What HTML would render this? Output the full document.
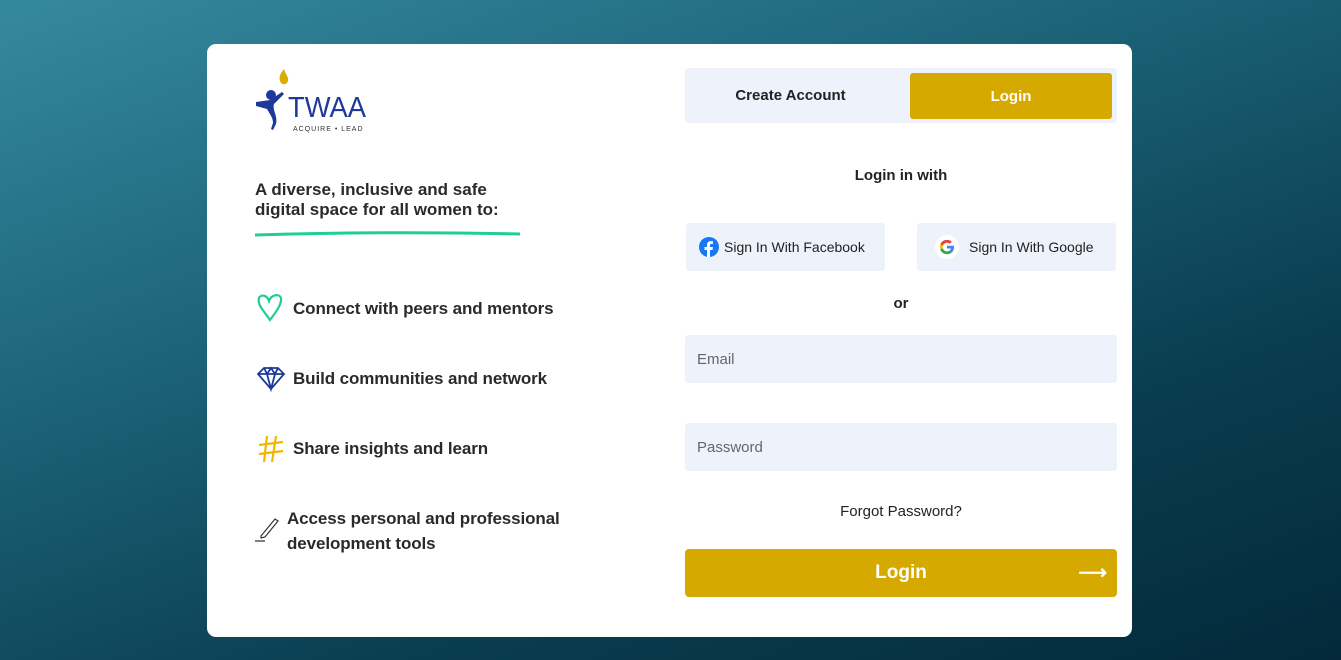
<!DOCTYPE html>
<html><head><style>
*{margin:0;padding:0;box-sizing:border-box}
body{width:1341px;height:660px;overflow:hidden;background:linear-gradient(160deg,#35899f 0%,#1a5f74 40%,#0a3d50 70%,#03293a 100%);font-family:"Liberation Sans",sans-serif;color:#222;position:relative}
.card{position:absolute;left:207px;top:44px;width:925px;height:593px;background:#fff;border-radius:9px}
.abs{position:absolute}
.feat{position:absolute;left:86px;font-size:17px;font-weight:bold;color:#2a2a2a;letter-spacing:-0.1px}
.tabs{left:478px;top:24px;width:432px;height:55px;background:#eef2fb;border-radius:4px}
.btn{font-size:15px;font-weight:bold;display:flex;align-items:center;justify-content:center}
.inp{left:478px;width:432px;height:48px;background:#eef2fb;border-radius:3px;font-size:15px;color:#666;padding-left:12px;display:flex;align-items:center}
.soc{top:179px;height:48px;background:#eef2fb;border-radius:3px;font-size:14px;color:#222;display:flex;align-items:center}
</style></head><body>
<div class="card">
<svg class="abs" style="left:47px;top:24px" width="115" height="66" viewBox="0 0 115 66">
<path d="M30 1c-4 5-6 9-3 14 4 3 8 0 7-5-1-3-3-5-4-9z" fill="#d9ac00"/>
<circle cx="17" cy="27" r="5" fill="#1d3a9a"/>
<path d="M2 34l14-2 12-8 2 2-10 10c-2 6 4 12 2 20l-3 6-2-1 2-6c0-6-4-10-6-14l-11-3z" fill="#1d3a9a"/>
<text x="34" y="49" font-family="Liberation Sans" font-size="29" fill="#1d3a9a" textLength="78" lengthAdjust="spacingAndGlyphs">TWAA</text>
<text x="39" y="63" font-family="Liberation Sans" font-size="7" fill="#333" letter-spacing="1">ACQUIRE • LEAD</text>
</svg>
<div class="abs" style="left:48px;top:136px;font-size:17px;font-weight:bold;line-height:20px;color:#2a2a2a">A diverse, inclusive and safe<br>digital space for all women to:</div>
<svg class="abs" style="left:47px;top:186px" width="268" height="8"><path d="M1 5Q130 1 266 4" stroke="#1fcf8f" stroke-width="3" fill="none"/></svg>
<svg class="abs" style="left:49px;top:249px" width="30" height="30" viewBox="0 0 30 30"><path d="M14 27C8 18 1 12 3 5c2-4 8-3 10 3 2-6 10-8 12-3 1 6-5 14-11 22z" stroke="#1fcf8f" stroke-width="2.2" fill="none"/></svg>
<div class="feat" style="top:255px">Connect with peers and mentors</div>
<svg class="abs" style="left:49px;top:322px" width="30" height="26" viewBox="0 0 30 26"><path d="M2 8l6-6h14l6 6-13 15z M2 8h26 M8 2l3 6 4 15 4-15 3-6 M11 8l4-6 4 6" stroke="#1d3a9a" stroke-width="1.8" fill="none"/></svg>
<div class="feat" style="top:325px">Build communities and network</div>
<svg class="abs" style="left:50px;top:390px" width="28" height="30" viewBox="0 0 28 30"><path d="M10 2L7 28 M19 2l-4 26 M2 11l24-3 M2 20l24-3" stroke="#f5b400" stroke-width="2.2" fill="none"/></svg>
<div class="feat" style="top:395px">Share insights and learn</div>
<svg class="abs" style="left:46px;top:472px" width="28" height="28" viewBox="0 0 28 28"><path d="M8 20l14-17 3 2-13 16-4 1z M2 25h10" stroke="#333" stroke-width="1.2" fill="none"/></svg>
<div class="feat" style="left:80px;top:462px;line-height:25px">Access personal and professional<br>development tools</div>

<div class="abs tabs"><div class="abs btn" style="left:0;top:0;width:211px;height:55px">Create Account</div>
<div class="abs btn" style="left:225px;top:5px;width:202px;height:46px;background:#d6a900;color:#fff;border-radius:3px">Login</div></div>
<div class="abs btn" style="left:478px;top:120px;width:432px;height:22px">Login in with</div>
<div class="abs soc" style="left:479px;width:199px;padding-left:13px"><svg width="20" height="20" viewBox="0 0 20 20"><circle cx="10" cy="10" r="10" fill="#1877f2"/><path d="M11 20v-7h2.5l.4-3H11V8.3c0-.8.3-1.4 1.4-1.4H14V4.2c-.3 0-1.2-.1-2.2-.1-2.3 0-3.8 1.4-3.8 3.9V10H5.5v3H8v7z" fill="#fff"/></svg><span style="margin-left:5px">Sign In With Facebook</span></div>
<div class="abs soc" style="left:710px;width:199px;padding-left:18px"><svg width="24" height="24" viewBox="0 0 24 24"><circle cx="12" cy="12" r="12" fill="#fff"/><path d="M19 12.2c0-.5 0-1-.1-1.4H12v2.7h3.9c-.2.9-.7 1.6-1.4 2.1v1.8h2.3c1.4-1.2 2.2-3 2.2-5.2z" fill="#4285f4"/><path d="M12 19.2c1.900 0 3.6-.6 4.8-1.7l-2.3-1.8c-.6.4-1.5.7-2.5.7-1.9 0-3.5-1.3-4.1-3H5.5v1.9c1.2 2.3 3.6 3.9 6.5 3.900z" fill="#34a853"/><path d="M7.9 13.4c-.3-.9-.3-1.9 0-2.8V8.7H5.5c-.8 1.6-.8 3.6 0 5.2z" fill="#fbbc05"/><path d="M12 7.7c1.1 0 2 .4 2.8 1.1l2-2C15.6 5.6 13.9 4.9 12 4.9 9.1 4.9 6.7 6.5 5.5 8.8l2.4 1.9c.6-1.8 2.2-3 4.1-3z" fill="#ea4335"/></svg><span style="margin-left:10px">Sign In With Google</span></div>
<div class="abs btn" style="left:478px;top:248px;width:432px;height:22px">or</div>
<div class="abs inp" style="top:291px">Email</div>
<div class="abs inp" style="top:379px">Password</div>
<div class="abs" style="left:478px;top:459px;width:432px;text-align:center;font-size:15px">Forgot Password?</div>
<div class="abs btn" style="left:478px;top:505px;width:432px;height:48px;background:#d6a900;color:#fff;border-radius:4px;font-size:19px">Login<span style="position:absolute;right:10px;top:11px;font-size:20px">⟶</span></div>
</div>
</body></html>
